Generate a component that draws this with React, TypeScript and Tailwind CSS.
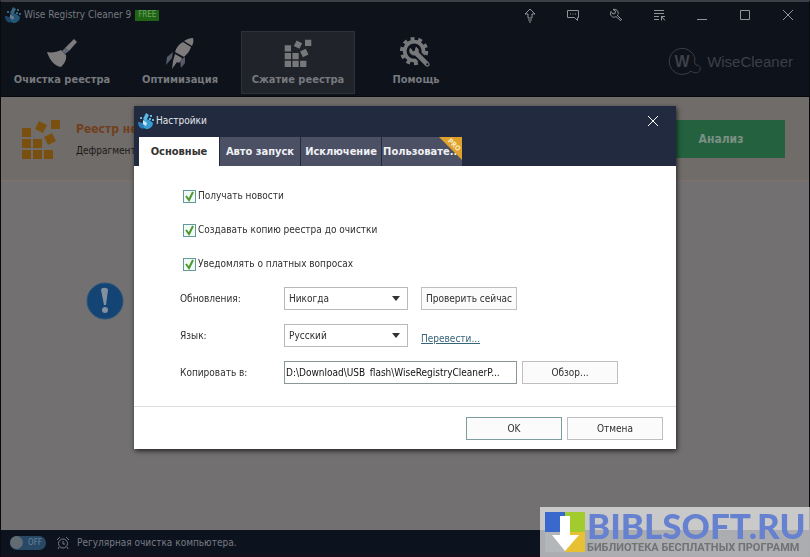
import React, { useState } from 'react';

// ===== Data =====
type TabId = 'main' | 'autorun' | 'exclude' | 'custom';

const TABS: { id: TabId; title: string; pro?: boolean }[] = [
  { id: 'main', title: 'Основные' },
  { id: 'autorun', title: 'Авто запуск' },
  { id: 'exclude', title: 'Исключение' },
  { id: 'custom', title: 'Пользовате...', pro: true },
];

const OPTIONS = [
  { id: 'news', label: 'Получать новости' },
  { id: 'backup', label: 'Создавать копию реестра до очистки' },
  { id: 'paid', label: 'Уведомлять о платных вопросах' },
];

// ===== App =====
const App: React.FC = () => (
  <div className="flex min-h-screen flex-col border-x border-t-2 border-x-[#0a0a0e] border-t-[#3d3f47] bg-[#0d121b] font-['DejaVu_Sans_Condensed','DejaVu_Sans',sans-serif] text-[10px] leading-4">
    <TitleBar />
    <Toolbar />
    <main className="flex-1 bg-[#737072]">
      <section className="flex h-[84px] items-center border-b border-[#80706b] bg-[#706c69] pr-6 pl-5">
        <BlocksIcon className="h-10 w-10 shrink-0" fill="#7a5010" />
        <div className="ml-[15px] flex-1">
          <h1 className="text-xs leading-5 font-bold text-[#703f1c]">Реестр не</h1>
          <p className="mt-1 text-[#1b191a]">Дефрагмент</p>
        </div>
        <button className="h-[38px] w-32 bg-[#24623f] text-xs font-bold text-[#7b8f83]">Анализ</button>
      </section>
      <div className="px-[85px] pt-[101px]">
        <AlertIcon />
      </div>
    </main>
    <StatusBar />
    <div className="fixed inset-0 flex items-center justify-center pb-0.5">
      <SettingsDialog />
    </div>
    <Watermark />
  </div>
);

export default App;

// ===== Window chrome =====
const TitleBar: React.FC = () => (
  <header className="flex h-[26px] items-center pl-1">
    <WiseIcon className="h-4 w-4 opacity-50" />
    <span className="ml-[3px] text-[#777a80]">Wise Registry Cleaner 9</span>
    <span className="ml-1 flex h-[11px] w-6 items-center justify-center bg-[#1f6515] text-[8px] text-[#72a568]">
      FREE
    </span>
    <div className="ml-auto flex">
      <ChromeButton label="Обновить">
        <path d="M8 2 3 7h3v4h4V7h3zM6 13h4M7 15h2" />
      </ChromeButton>
      <ChromeButton label="Отзыв">
        <path d="M2.500 3.500h11v7h-1v3l-3-3h-7zM5 7h1M7.500 7h1M10 7h1" />
      </ChromeButton>
      <ChromeButton label="Инструменты">
        <path d="m9 8 5 5M13 14 8 9.500C6 11 3 10 2.500 7c0-1 0-2 .5-2.500L5 7l2-.5L7.500 4 5 2.500C8 1.500 11 4 10 7.500" />
      </ChromeButton>
      <ChromeButton label="Меню">
        <path d="M3 3.500h10M3 6.500h10M3 9.500h5M3 12.500h5M10 9.500h4M10.500 9.500v4M11 10l3 3.500" />
      </ChromeButton>
      <ChromeButton label="Свернуть">
        <path d="M3 12.500h10" />
      </ChromeButton>
      <ChromeButton label="Развернуть">
        <path d="M3.500 3.500h9v9h-9z" />
      </ChromeButton>
      <ChromeButton label="Закрыть">
        <path d="m3 3 10 10M13 3 3 13" />
      </ChromeButton>
    </div>
  </header>
);

const ChromeButton: React.FC<{ label: string; children: React.ReactNode }> = ({ label, children }) => (
  <button aria-label={label} className="flex h-[26px] w-[43px] items-center justify-center text-[#92949a]">
    <svg viewBox="0 0 16 16" className="h-4 w-4" fill="none" stroke="currentColor">
      {children}
    </svg>
  </button>
);

const Toolbar: React.FC = () => (
  <nav className="flex h-[69px] items-center justify-between border-b border-[#08090c] pr-4 pl-1">
    <div className="flex gap-1">
      <ToolButton title="Очистка реестра">
        <BroomIcon />
      </ToolButton>
      <ToolButton title="Оптимизация">
        <RocketIcon />
      </ToolButton>
      <ToolButton title="Сжатие реестра" active>
        <BlocksIcon className="h-7 w-7" fill="#77787a" />
      </ToolButton>
      <ToolButton title="Помощь">
        <GearIcon />
      </ToolButton>
    </div>
    <div className="flex items-center gap-[5px] font-['Liberation_Sans',sans-serif] text-[#3c4048]">
      <svg viewBox="0 0 34 30" className="h-[30px] w-[34px]" fill="none" stroke="currentColor">
        <path d="M27 12a13 13 0 1 0-4 12c3 3 8 2 9-1 1-3-1-5-4-5-1-1-2-2-1-6" />
        <text
          x="14"
          y="20"
          fill="currentColor"
          stroke="none"
          fontSize="16"
          fontWeight="bold"
          textAnchor="middle"
        >
          W
        </text>
      </svg>
      <span className="text-[15px]">WiseCleaner</span>
    </div>
  </nav>
);

const ToolButton: React.FC<{ title: string; active?: boolean; children: React.ReactNode }> = ({
  title,
  active,
  children,
}) => (
  <button
    className={[
      'flex h-[63px] w-[114px] flex-col items-center justify-between border py-[5px] text-[11px] font-bold text-[#77797e]',
      active ? 'border-[#2e3137] bg-[#202329]' : 'border-transparent',
    ].join(' ')}
  >
    <span className="flex h-8 items-center">{children}</span>
    <span className="whitespace-nowrap">{title}</span>
  </button>
);

const StatusBar: React.FC = () => (
  <footer className="flex h-[27px] items-center border-b-2 border-[#160d18] bg-[#0d131e] pl-[9px] text-[#777b82]">
    <button
      role="switch"
      aria-checked="false"
      aria-label="Расписание"
      className="flex h-[14px] w-9 items-center justify-between rounded-full bg-[#294866] pr-1 text-[8px] leading-3 text-[#6384a0]"
    >
      <span className="h-[13px] w-[13px] rounded-full bg-[#626a72]" />
      OFF
    </button>
    <svg viewBox="0 0 14 14" className="ml-[10px] h-[14px] w-[14px]" fill="none" stroke="currentColor">
      <circle cx="7" cy="7.500" r="4.500" />
      <path d="M7 5v3h2M1 4l3-3M10 1l3 3M3 11l-1 2M11 11l1 2" />
    </svg>
    <span className="ml-[7px]">Регулярная очистка компьютера.</span>
  </footer>
);

// ===== Settings dialog =====
const SettingsDialog: React.FC = () => {
  const [tab, setTab] = useState<TabId>('main');
  const [checked, setChecked] = useState<Record<string, boolean>>({ news: true, backup: true, paid: true });

  return (
    <div
      role="dialog"
      aria-label="Настройки"
      className="w-[542px] bg-white text-[#2f2f2f] shadow-[1px_2px_5px_rgba(0,0,0,0.7)]"
    >
      <div className="bg-[#212a3f] pl-1">
        <div className="flex h-[31px] items-center pb-0.5">
          <WiseIcon className="h-4 w-4" />
          <h2 className="ml-[2px] text-[#e4e6ea]">Настройки</h2>
          <button aria-label="Закрыть окно" className="mr-4 ml-auto p-[1px] text-white">
            <svg viewBox="0 0 12 12" className="h-3 w-3" fill="none" stroke="currentColor">
              <path d="m1 1 10 10M11 1 1 11" />
            </svg>
          </button>
        </div>
        <div role="tablist" className="flex gap-px pl-px">
          {TABS.map((t) => (
            <button
              key={t.id}
              role="tab"
              aria-selected={tab === t.id}
              onClick={() => setTab(t.id)}
              className={[
                'relative h-[29px] w-20 text-[11px] font-bold whitespace-nowrap',
                tab === t.id ? 'bg-white text-[#333]' : 'bg-[#4b5064] text-[#f0f1f4]',
              ].join(' ')}
            >
              {t.title}
              {t.pro && <ProRibbon />}
            </button>
          ))}
        </div>
      </div>

      <form onSubmit={(e) => e.preventDefault()}>
        <div className="px-[46px] py-[22px]">
          <div className="flex flex-col gap-[18px] pl-[3px]">
            {OPTIONS.map((o) => (
              <label key={o.id} className="flex items-center gap-[2px]">
                <span className="relative flex h-[13px] w-[13px]">
                  <input
                    type="checkbox"
                    checked={checked[o.id]}
                    onChange={(e) => setChecked({ ...checked, [o.id]: e.target.checked })}
                    className="peer h-[13px] w-[13px] appearance-none border border-[#5f9b9c] bg-[#f3faf6]"
                  />
                  <svg
                    viewBox="0 0 13 13"
                    className="pointer-events-none absolute inset-0 hidden peer-checked:block"
                    fill="none"
                    stroke="#4c9a2c"
                    strokeWidth="2"
                  >
                    <path d="m3 6 3 4 4-8" />
                  </svg>
                </span>
                {o.label}
              </label>
            ))}
          </div>

          <div className="mt-[15px] grid grid-cols-[104px_1fr] items-center gap-y-[14px]">
            <label htmlFor="updates">Обновления:</label>
            <div className="flex gap-[13px]">
              <Select id="updates" options={['Никогда']} />
              <DialogButton>Проверить сейчас</DialogButton>
            </div>

            <label htmlFor="lang">Язык:</label>
            <div className="flex items-end gap-[13px]">
              <Select id="lang" options={['Русский']} />
              <a href="#translate" className="text-[#376478] underline">
                Перевести...
              </a>
            </div>

            <label htmlFor="path">Копировать в:</label>
            <div className="flex gap-[5px]">
              <input
                id="path"
                defaultValue="D:\Download\USB_flash\WiseRegistryCleanerP..."
                className="h-[23px] w-[233px] border border-[#8a9697] px-px text-[#111]"
              />
              <DialogButton>Обзор...</DialogButton>
            </div>
          </div>
        </div>

        <div className="flex justify-end gap-[5px] border-t border-[#dcdcdc] px-[13px] pt-[10px] pb-[9px]">
          <DialogButton primary>OK</DialogButton>
          <DialogButton>Отмена</DialogButton>
        </div>
      </form>
    </div>
  );
};

const DialogButton: React.FC<{ primary?: boolean; children: React.ReactNode }> = ({ primary, children }) => (
  <button
    className={[
      'h-[23px] w-24 border bg-[#fcfbfc] whitespace-nowrap',
      primary ? 'border-[#7c9c9d]' : 'border-[#c1bec3]',
    ].join(' ')}
  >
    {children}
  </button>
);

const Select: React.FC<{ id: string; options: string[] }> = ({ id, options }) => (
  <div className="relative">
    <select id={id} className="h-[23px] w-[124px] appearance-none border border-[#b9b9b9] bg-white px-1">
      {options.map((o) => (
        <option key={o}>{o}</option>
      ))}
    </select>
    <svg viewBox="0 0 8 5" className="pointer-events-none absolute top-[9px] right-2 h-[5px] w-2" fill="#333">
      <path d="M0 0h8L4 5z" />
    </svg>
  </div>
);

const ProRibbon: React.FC = () => (
  <span className="absolute top-0 right-0 h-[23px] w-[23px] overflow-hidden">
    <svg viewBox="0 0 23 23" className="h-[23px] w-[23px]">
      <path d="M0 0h23v23z" fill="#dfa02c" />
      <text y="2" fill="#fbe9bd" fontSize="7" textAnchor="middle" transform="translate(15 8) rotate(45)">
        PRO
      </text>
    </svg>
  </span>
);

// ===== Site badge =====
const Watermark: React.FC = () => (
  <aside className="fixed right-0 bottom-0 flex h-[50px] w-[270px] items-center gap-[2px] bg-[#f0f0f0]/70 pl-[5px]">
    <svg viewBox="0 0 40 40" className="h-10 w-10 shrink-0">
      <path d="M0 0h20v20H0z" fill="#3969cd" />
      <path d="M20 0h20v20H20z" fill="#a2cb2e" />
      <path d="M0 20h20v20H0z" fill="#b4b7ba" />
      <path d="M20 20h20v20H20z" fill="#e7c033" />
      <path d="M15 4h10v19h9L20 39 7 23h8z" fill="#fff" />
    </svg>
    <div className="whitespace-nowrap">
      <div className="font-['Lato',sans-serif] text-[35px] leading-8 font-black text-[#6681cf]">BIBLSOFT.RU</div>
      <div className="font-['Roboto',sans-serif] text-[11px] leading-[14px] font-bold text-[#707274]">
        БИБЛИОТЕКА БЕСПЛАТНЫХ ПРОГРАММ
      </div>
    </div>
  </aside>
);

// ===== Icons =====
const BlocksIcon: React.FC<{ className: string; fill: string }> = ({ className, fill }) => (
  <svg viewBox="0 0 40 40" className={className} fill={fill}>
    <path d="M1 9h9v9H1zM1 20h9v9H1zM12 20h9v9h-9zM1 31h9v9H1zM12 31h9v9h-9zM23 31h9v9h-9z" />
    <path d="m18 2 8 4-4 8-8-4zM30 1h9v9h-9zM31 14l4 8-8 4-4-8z" />
  </svg>
);

const BroomIcon: React.FC = () => (
  <svg viewBox="0 0 32 32" className="h-8 w-8" fill="#7d7b7c">
    <path d="m28 2 3 3-8 9-4-3z" />
    <path d="m19 11 4 3-4 3-3-3z" fill="#626674" />
    <path d="m15 13 5 5c1 5-2 9-5 12C9 29 4 24 1 15c5 1 10 0 14-2" />
  </svg>
);

const RocketIcon: React.FC = () => (
  <svg viewBox="0 0 32 32" className="h-8 w-8" fill="#7d7b7c">
    <path d="M29 1c1 3 0 6-1 8l-8-5c3-2 6-3 9-3M19 5l8 5c-1 4-4 7-7 10l-9-5c1-4 4-8 8-10" />
    <path d="m9 15-6 5-1 8 6-7zM21 20v6l-4 5-1-8z" fill="#555968" />
    <path d="m11 17 7 4-3 5-2-1-5 7 1-8z" />
  </svg>
);

const GearIcon: React.FC = () => (
  <svg viewBox="0 0 34 34" className="h-8 w-8" fill="none" stroke="#77787a">
    <circle cx="15" cy="15" r="10" strokeWidth="4" />
    <circle cx="15" cy="15" r="13" strokeWidth="4" strokeDasharray="4.080 4.080" />
    <path d="m17 17 13 13" stroke="#0d121b" strokeWidth="9" />
    <path d="m17 17 12 12" strokeWidth="5" strokeLinecap="round" />
    <path d="M11 12c-2 4 1 8 5 7 4-1 5-6 1-8l-1 4-2 1z" fill="#77787a" />
    <circle cx="29" cy="29" r="1.200" fill="#0d121b" stroke="none" />
  </svg>
);

const WiseIcon: React.FC<{ className: string }> = ({ className }) => (
  <svg viewBox="0 0 16 16" className={className}>
    <path d="M6 7c3-2 6 0 9 3 0 3-2 5-5 6-4 0-6-2-6-5z" fill="#3a9ad3" />
    <path d="M0 9c3 0 5 1 6 5l-1 2c-3-1-5-3-5-7" fill="#2a7eb8" />
    <path d="M8 0 5 6l3 2 3-6z" fill="#5fb8e2" />
    <path d="m5 7 4 3-1 3-3-2z" fill="#c6ebf7" />
    <path d="M12 2h2v2h-2zM14 6h2v2h-2zM2 4h2v2H2zM11 5h2v2h-2z" fill="#5db9e0" />
  </svg>
);

const AlertIcon: React.FC = () => (
  <svg viewBox="0 0 38 38" className="h-[38px] w-[38px]" role="img" aria-label="Внимание">
    <circle cx="19" cy="19" r="18" fill="#144474" stroke="#28577f" />
    <path d="M15 8c0-3 7-3 7 0l-2 15h-2z" fill="#8290a0" />
    <circle cx="19" cy="28" r="3" fill="#8290a0" />
  </svg>
);
